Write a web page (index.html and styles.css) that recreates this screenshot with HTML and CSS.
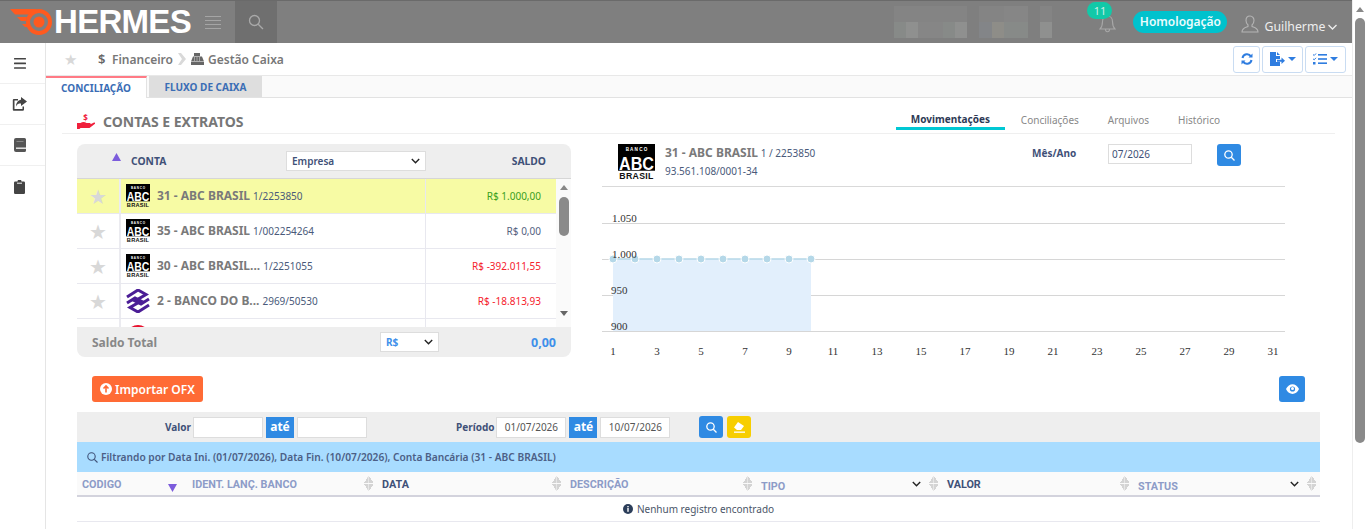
FILE: index.html
```html
<!DOCTYPE html>
<html lang="pt-BR">
<head>
    <meta charset="UTF-8">
    <meta name="viewport" content="width=device-width, initial-scale=1.0">
    <title>Hermes - Gestão Caixa</title>
    <link rel="stylesheet" href="styles.css">
</head>
<body>
    <div class="app">
        <div class="main">
            <!-- Top bar -->
            <header class="topbar">
                <div class="brand">
                    <svg class="brand__icon" width="44" height="26" viewBox="0 0 44 26">
                        <path d="M0 0h27l-5 3.500-2 2H5zM7 8h10l-1 4H11zM12 15h5l1 3h-3z" fill="#ff5a1f"/>
                        <circle cx="29" cy="13" r="11" fill="none" stroke="#ff5a1f" stroke-width="4"/>
                        <circle cx="29" cy="13" r="5.500" fill="#ff5a1f"/>
                    </svg>
                    <span class="brand__name">HERMES</span>
                </div>
                <div class="menu-lines"><i></i><i></i><i></i><i></i></div>
                <div class="top-search">
                    <svg width="16" height="16" viewBox="0 0 16 16" fill="none" stroke="#a9a9a9" stroke-width="1.3"><circle cx="6.5" cy="6.5" r="5"/><path d="M10.2 10.2L15 15"/></svg>
                </div>
                <!-- blurred-out company name -->
                <div class="blurred">
                    <i class="m1"></i><i class="m1"></i><i class="m1"></i><i class="m1"></i><i class="m1"></i><i class="m1"></i><i></i><i class="m1"></i><i class="m1"></i><i class="m2"></i><i class="m2"></i><i></i><i class="m1"></i>
                    <i class="m3"></i><i class="m4"></i><i class="m2"></i><i class="m2"></i><i class="m3"></i><i class="m4"></i><i></i><i class="m5"></i><i class="m6"></i><i class="m3"></i><i class="m3"></i><i></i><i class="m4"></i>
                </div>
                <div class="bell">
                    <svg width="17" height="20" viewBox="0 0 17 20" fill="none" stroke="#a8a8a8" stroke-width="1.1"><path d="M8.5 2c-3 0-5 2.500-5 5.500 0 4-1 6-2.500 7.500h15c-1.500-1.500-2.500-3.500-2.500-7.500C13.500 4.500 11.500 2 8.500 2zM6.500 15.500c0 3 4 3 4 0"/></svg>
                    <span class="bell__badge">11</span>
                </div>
                <span class="env-pill">Homologação</span>
                <div class="user">
                    <svg class="user__icon" width="18" height="18" viewBox="0 0 18 18" fill="none" stroke="#b5b5b5" stroke-width="1.1"><path d="M9 1c-2.500 0-4 2-4 4.500 0 2 1 3.500 2 4.500v1.500c-2 1-6 1.500-6 5.500h16c0-4-4-4.500-6-5.500V10c1-1 2-2.500 2-4.500C13 3 11.500 1 9 1z"/></svg>
                    <span>Guilherme</span>
                    <svg width="9" height="6" viewBox="0 0 9 6" fill="none" stroke="#eee" stroke-width="1.300"><path d="M.5 1l4 4 4-4"/></svg>
                </div>
            </header>

            <div class="body-row">
                <!-- Sidebar -->
                <nav class="sidebar">
                    <a class="sidebar__item">
                        <svg width="12" height="11" viewBox="0 0 12 11" fill="#444"><rect width="12" height="1.600" rx=".5"/><rect y="4.600" width="12" height="1.600" rx=".5"/><rect y="9.200" width="12" height="1.600" rx=".5"/></svg>
                    </a>
                    <a class="sidebar__item">
                        <svg width="15" height="14" viewBox="0 0 15 14" fill="#444"><path d="M9 0l6 4.500L9 9V6.500C6.500 6.500 5 7 4 9.500 4 6 6 3 9 2.700zM1.500 2H6v1.500H2.500v8.500h8V9.500H12v3a1.300 1.300 0 0 1-1.300 1.300H1.500A1.300 1.300 0 0 1 .8 12.500V3A1.200 1.200 0 0 1 1.500 2z"/></svg>
                    </a>
                    <a class="sidebar__item">
                        <svg width="12" height="14" viewBox="0 0 12 14" fill="#555"><path d="M2 0h8.500A1.500 1.500 0 0 1 12 1.500V12.500A1.500 1.500 0 0 1 10.500 14H2a2 2 0 0 1-2-2V2a2 2 0 0 1 2-2z"/><rect x="2" y="9.500" width="10" height="1.400" fill="#eee"/><rect x="2.500" y="3" width="7" height="1" fill="#888"/></svg>
                    </a>
                    <a class="sidebar__item">
                        <svg width="11" height="14" viewBox="0 0 11 14" fill="#444"><path d="M1.200 1.500H3.500a2 2 0 0 1 4 0h2.300A1.200 1.200 0 0 1 11 2.700v10.100A1.200 1.200 0 0 1 9.800 14H1.200A1.200 1.200 0 0 1 0 12.800V2.700a1.200 1.200 0 0 1 1.200-1.200z"/><rect x="3" y="2.600" width="5" height="1.300" fill="#ccc"/></svg>
                    </a>
                </nav>

                <div class="content">
                    <!-- Breadcrumb -->
                    <div class="crumbs">
                        <span class="crumbs__star">★</span>
                        <span class="crumbs__dollar">$</span>
                        <span class="crumbs__label">Financeiro</span>
                        <svg class="crumbs__sep" width="8" height="12" viewBox="0 0 8 12"><path d="M0 0h3l5 6-5 6H0l4-6z" fill="#d9d9d9"/></svg>
                        <svg class="crumbs__reg" width="13" height="12" viewBox="0 0 13 12" fill="#666"><path d="M3 0h6v3H3zM2 3.500h9l2 5H0zM0 9h13v3H0z"/><path d="M3 5h1M5.500 5h1M8 5h1M3 7h1M5.500 7h1M8 7h1" stroke="#fff" stroke-width=".8"/></svg>
                        <span class="crumbs__label">Gestão Caixa</span>
                        <div class="crumbs__actions">
                            <button class="tool-btn tool-btn--s">
                                <svg width="12" height="12" viewBox="0 0 12 12" fill="none" stroke="#2f7de0" stroke-width="2"><path d="M1.500 5A4.600 4.600 0 0 1 10 3.500M10.500 7A4.600 4.600 0 0 1 2 8.500"/><path d="M11.500 .5v4h-4zM.5 11.500v-4h4z" fill="#2f7de0" stroke="none"/></svg>
                            </button>
                            <button class="tool-btn">
                                <svg width="15" height="14" viewBox="0 0 15 14" fill="#2f7de0"><path d="M0 0h6v4h4v3H6v3h4v4H0zM7 0l3 3H7zM7 7.800h4.500V5.500L15 8.800l-3.500 3.300V9.800H7z"/></svg>
                                <i class="caret"></i>
                            </button>
                            <button class="tool-btn">
                                <svg width="14" height="12" viewBox="0 0 14 12" fill="#2f7de0"><rect x="5" y="1" width="9" height="1.600"/><rect x="5" y="5.200" width="9" height="1.600"/><rect x="5" y="9.400" width="9" height="1.600"/><path d="M0 1.500l1.200 1L3 .5M0 5.800l1.200 1L3 4.800" fill="none" stroke="#2f7de0"/><rect y="9" width="2.500" height="2.500"/></svg>
                                <i class="caret"></i>
                            </button>
                        </div>
                    </div>

                    <!-- Tabs -->
                    <div class="tabs">
                        <a class="tabs__item tabs__item--active">CONCILIAÇÃO</a>
                        <a class="tabs__item">FLUXO DE CAIXA</a>
                    </div>

                    <div class="panel">
                        <div class="panel__head">
                            <svg width="18" height="18" viewBox="0 0 18 18">
                                <path d="M0 11h3.500c2-1.500 4-1.500 6 0h3c1.500 0 1.500 1.800 0 1.800H9l4-.2 4-2c1-.3 1.500.8.700 1.500L12.500 16H3.500l-1 .9H0z" fill="#f0203c"/>
                                <text x="8.500" y="9" class="hand-dollar" text-anchor="middle">$</text>
                            </svg>
                            <h2>CONTAS E EXTRATOS</h2>
                            <div class="subnav">
                                <a class="subnav__item subnav__item--active">Movimentações</a>
                                <a class="subnav__item">Conciliações</a>
                                <a class="subnav__item">Arquivos</a>
                                <a class="subnav__item">Histórico</a>
                            </div>
                        </div>

                        <div class="split">
                            <!-- Accounts list -->
                            <section class="accounts">
                                <div class="accounts__head">
                                    <svg class="sort-up" width="9" height="8" viewBox="0 0 9 8"><path d="M4.500 0L9 8H0z" fill="#7c5cdc"/></svg>
                                    <span class="accounts__conta">CONTA</span>
                                    <select class="accounts__company"><option>Empresa</option></select>
                                    <span class="accounts__saldo">SALDO</span>
                                </div>
                                <div class="accounts__body">
                                    <div class="accounts__rows">
                                        <div class="acc-row acc-row--on">
                                            <span class="acc-row__star">★</span>
                                            <div class="acc-row__name">
                                                <svg width="24" height="24" viewBox="0 0 36 36"><rect width="36" height="26" fill="#000"/><text x="18" y="7" class="abc-top" text-anchor="middle">B A N C O</text><text x="18" y="25" class="abc-mid" text-anchor="middle" textLength="34" lengthAdjust="spacingAndGlyphs">ABC</text><text x="18" y="34" class="abc-bot" text-anchor="middle">BRASIL</text></svg>
                                                <b>31 - ABC BRASIL</b><small>1/2253850</small>
                                            </div>
                                            <span class="acc-row__val val--green">R$ 1.000,00</span>
                                        </div>
                                        <div class="acc-row">
                                            <span class="acc-row__star">★</span>
                                            <div class="acc-row__name">
                                                <svg width="24" height="24" viewBox="0 0 36 36"><rect width="36" height="26" fill="#000"/><text x="18" y="7" class="abc-top" text-anchor="middle">B A N C O</text><text x="18" y="25" class="abc-mid" text-anchor="middle" textLength="34" lengthAdjust="spacingAndGlyphs">ABC</text><text x="18" y="34" class="abc-bot" text-anchor="middle">BRASIL</text></svg>
                                                <b>35 - ABC BRASIL</b><small>1/002254264</small>
                                            </div>
                                            <span class="acc-row__val">R$ 0,00</span>
                                        </div>
                                        <div class="acc-row">
                                            <span class="acc-row__star">★</span>
                                            <div class="acc-row__name">
                                                <svg width="24" height="24" viewBox="0 0 36 36"><rect width="36" height="26" fill="#000"/><text x="18" y="7" class="abc-top" text-anchor="middle">B A N C O</text><text x="18" y="25" class="abc-mid" text-anchor="middle" textLength="34" lengthAdjust="spacingAndGlyphs">ABC</text><text x="18" y="34" class="abc-bot" text-anchor="middle">BRASIL</text></svg>
                                                <b>30 - ABC BRASIL...</b><small>1/2251055</small>
                                            </div>
                                            <span class="acc-row__val val--red">R$ -392.011,55</span>
                                        </div>
                                        <div class="acc-row">
                                            <span class="acc-row__star">★</span>
                                            <div class="acc-row__name">
                                                <svg width="24" height="24" viewBox="0 0 24 24" fill="none" stroke="#4b1d96" stroke-width="3"><path d="M1 8L12 1l8 4.500L9 12l6 3 8-5"/><path d="M23 16l-11 7-8-4.500L15 12 9 9l-8 5"/></svg>
                                                <b>2 - BANCO DO B...</b><small>2969/50530</small>
                                            </div>
                                            <span class="acc-row__val val--red">R$ -18.813,93</span>
                                        </div>
                                        <div class="acc-row">
                                            <span class="acc-row__star"></span>
                                            <div class="acc-row__name"><svg width="24" height="24" viewBox="0 0 24 24"><circle cx="12" cy="13" r="12" fill="#e8112d"/></svg></div>
                                            <span class="acc-row__val"></span>
                                        </div>
                                    </div>
                                    <div class="mini-scroll">
                                        <i class="mini-scroll__up"></i>
                                        <i class="mini-scroll__thumb"></i>
                                        <i class="mini-scroll__down"></i>
                                    </div>
                                </div>
                                <div class="accounts__foot">
                                    <span class="accounts__total">Saldo Total</span>
                                    <select class="accounts__cur"><option>R$</option></select>
                                    <span class="accounts__sum">0,00</span>
                                </div>
                            </section>

                            <!-- Account detail and chart -->
                            <section class="detail">
                                <div class="detail__head">
                                    <svg width="37" height="37" viewBox="0 0 36 36"><rect width="36" height="26" fill="#000"/><text x="18" y="7" class="abc-top" text-anchor="middle">B A N C O</text><text x="18" y="25" class="abc-mid" text-anchor="middle" textLength="34" lengthAdjust="spacingAndGlyphs">ABC</text><text x="18" y="34" class="abc-bot" text-anchor="middle">BRASIL</text></svg>
                                    <div class="detail__info">
                                        <p><b>31 - ABC BRASIL</b> 1 / 2253850</p>
                                        <p>93.561.108/0001-34</p>
                                    </div>
                                    <div class="month">
                                        <label>Mês/Ano</label>
                                        <input class="month__input" type="text" value="07/2026">
                                        <button class="icon-btn">
                                            <svg width="11" height="11" viewBox="0 0 11 11" fill="none" stroke="#fff" stroke-width="1.300"><circle cx="4.500" cy="4.500" r="3.700"/><path d="M7.300 7.300L10.500 10.500"/></svg>
                                        </button>
                                    </div>
                                </div>
                                <svg class="chart" width="683" height="170" viewBox="0 0 683 170">
                                    <path d="M0 36.500H683M0 72.500H683M0 108.500H683M0 144.500H683" stroke="#d6d6d6"/>
                                    <rect x="11" y="72" width="198" height="72" fill="#e2effc"/>
                                    <path d="M11 72H209" stroke="#b5d8e8" stroke-width="1.500" stroke-dasharray="14 8" stroke-dashoffset="-4"/>
                                    <g fill="#b5d8e8" stroke="#fff">
                                        <circle cx="11" cy="72" r="4"/><circle cx="33" cy="72" r="4"/><circle cx="55" cy="72" r="4"/><circle cx="77" cy="72" r="4"/><circle cx="99" cy="72" r="4"/><circle cx="121" cy="72" r="4"/><circle cx="143" cy="72" r="4"/><circle cx="165" cy="72" r="4"/><circle cx="187" cy="72" r="4"/><circle cx="209" cy="72" r="4"/>
                                    </g>
                                    <g class="chart__y">
                                        <text x="10" y="35">1.050</text><text x="10" y="71">1.000</text><text x="9" y="107">950</text><text x="9" y="143">900</text>
                                    </g>
                                    <g class="chart__x" text-anchor="middle">
                                        <text x="11" y="168">1</text><text x="55" y="168">3</text><text x="99" y="168">5</text><text x="143" y="168">7</text><text x="187" y="168">9</text><text x="231" y="168">11</text><text x="275" y="168">13</text><text x="319" y="168">15</text><text x="363" y="168">17</text><text x="407" y="168">19</text><text x="451" y="168">21</text><text x="495" y="168">23</text><text x="539" y="168">25</text><text x="583" y="168">27</text><text x="627" y="168">29</text><text x="671" y="168">31</text>
                                    </g>
                                </svg>
                            </section>
                        </div>

                        <!-- Import row -->
                        <div class="actions">
                            <button class="import-btn">
                                <svg width="12" height="12" viewBox="0 0 12 12"><circle cx="6" cy="6" r="6" fill="#fff"/><path d="M6 9.500V3M3.500 5.500L6 3l2.500 2.500" fill="none" stroke="#ff6b35" stroke-width="1.600"/></svg>
                                Importar OFX
                            </button>
                            <button class="eye-btn">
                                <svg width="13" height="10" viewBox="0 0 13 10"><path d="M0 5c3-6.500 10-6.500 13 0-3 6.500-10 6.500-13 0z" fill="#fff"/><circle cx="6.500" cy="5" r="2.600" fill="#2f8ae3"/><circle cx="6.500" cy="4.500" r="1.500" fill="#fff"/></svg>
                            </button>
                        </div>

                        <!-- Filters -->
                        <div class="filters">
                            <label>Valor</label>
                            <input class="filters__input" type="text">
                            <span class="filters__ate">até</span>
                            <input class="filters__input" type="text">
                            <label class="filters__periodo">Período</label>
                            <input class="filters__input" type="text" value="01/07/2026">
                            <span class="filters__ate">até</span>
                            <input class="filters__input" type="text" value="10/07/2026">
                            <button class="icon-btn icon-btn--search">
                                <svg width="11" height="11" viewBox="0 0 11 11" fill="none" stroke="#fff" stroke-width="1.300"><circle cx="4.500" cy="4.500" r="3.700"/><path d="M7.300 7.300L10.500 10.500"/></svg>
                            </button>
                            <button class="icon-btn icon-btn--clear">
                                <svg width="13" height="11" viewBox="0 0 13 11" fill="#fff"><path d="M5 0l6 4-3 4H4L1 5.500z"/><rect x="1" y="9.500" width="11" height="1.300"/></svg>
                            </button>
                        </div>
                        <div class="notice">
                            <svg width="11" height="11" viewBox="0 0 11 11" fill="none" stroke="#3f5178" stroke-width="1.100"><circle cx="4.500" cy="4.500" r="3.700"/><path d="M7.300 7.300L10.500 10.500"/></svg>
                            Filtrando por Data Ini. (01/07/2026), Data Fin. (10/07/2026), Conta Bancária (31 - ABC BRASIL)
                        </div>

                        <!-- Grid -->
                        <div class="grid-head">
                            <div class="grid-head__cell">CODIGO<svg class="sort-down" width="9" height="8" viewBox="0 0 9 8"><path d="M0 0h9L4.500 8z" fill="#7c5cdc"/></svg></div>
                            <div class="grid-head__cell">IDENT. LANÇ. BANCO<i class="sorter"></i></div>
                            <div class="grid-head__cell grid-head__cell--dark">DATA<i class="sorter"></i></div>
                            <div class="grid-head__cell">DESCRIÇÃO<i class="sorter"></i></div>
                            <div class="grid-head__cell grid-head__cell--low">TIPO<span class="grid-head__tools"><svg width="9" height="6" viewBox="0 0 9 6" fill="none" stroke="#222" stroke-width="1.400"><path d="M.8 1l3.700 3.700L8.200 1"/></svg><i class="sorter"></i></span></div>
                            <div class="grid-head__cell grid-head__cell--dark">VALOR<i class="sorter"></i></div>
                            <div class="grid-head__cell grid-head__cell--low">STATUS<span class="grid-head__tools"><svg width="9" height="6" viewBox="0 0 9 6" fill="none" stroke="#222" stroke-width="1.400"><path d="M.8 1l3.700 3.700L8.200 1"/></svg><i class="sorter"></i></span></div>
                        </div>
                        <div class="grid-empty">
                            <svg width="10" height="10" viewBox="0 0 10 10"><circle cx="5" cy="5" r="5" fill="#2c3e5a"/><rect x="4.300" y="4" width="1.400" height="3.800" fill="#fff"/><rect x="4.300" y="2" width="1.400" height="1.300" fill="#fff"/></svg>
                            Nenhum registro encontrado
                        </div>
                    </div>
                </div>
            </div>
        </div>

        <!-- Page scrollbar -->
        <div class="page-scroll">
            <i class="page-scroll__up"></i>
            <i class="page-scroll__thumb"></i>
        </div>
    </div>
</body>
</html>
```

FILE: styles.css
```css
/* Base */
* {
    box-sizing: border-box;
}

html, body {
    margin: 0;
    height: 529px;
    overflow: hidden;
}

body {
    font-family: "Noto Sans", "Open Sans", sans-serif;
    font-size: 10px;
    color: #3f5178;
    background: #fff;
}

button {
    font-family: inherit;
    cursor: pointer;
}

.abc-top {
    font: bold 4.500px "Liberation Sans", sans-serif;
    fill: #fff;
}

.abc-mid {
    font: bold 18px "Liberation Sans", sans-serif;
    fill: #fff;
}

.abc-bot {
    font: bold 8.500px "Liberation Sans", sans-serif;
    fill: #111;
    letter-spacing: .3px;
}

.app {
    display: flex;
    height: 529px;
}

.main {
    width: 1352px;
    flex: none;
    display: flex;
    flex-direction: column;
}

/* Top bar */
.topbar {
    height: 43px;
    flex: none;
    display: flex;
    align-items: center;
    background: #7f7f7f;
    border-top: 1px solid #6a6a6a;
}

.brand {
    display: flex;
    align-items: center;
    width: 197px;
    padding-left: 10px;
}

.brand__icon {
    flex: none;
}

.brand__name {
    font: bold 33px "Liberation Sans", sans-serif;
    letter-spacing: -.7px;
    color: #fff;
}

.menu-lines {
    width: 38px;
    padding: 0 8px 0 8px;
    display: flex;
    flex-direction: column;
    gap: 3px;
}

.menu-lines i {
    display: block;
    width: 16px;
    height: 1px;
    background: #a5a5a5;
}

.top-search {
    width: 42px;
    height: 42px;
    display: flex;
    align-items: center;
    justify-content: center;
    background: #6f6f6f;
}

.blurred {
    display: grid;
    grid-template-columns: repeat(13, 12.2px);
    grid-template-rows: 16px 16px;
    margin-left: 617px;
}

.blurred .m1 { background: #848484; }
.blurred .m2 { background: #868686; }
.blurred .m3 { background: #878a88; }
.blurred .m4 { background: #8f908f; }
.blurred .m5 { background: #838588; }
.blurred .m6 { background: #8e8d88; }

.bell {
    position: relative;
    margin-left: 47px;
    margin-top: 4px;
    height: 20px;
}

.bell__badge {
    position: absolute;
    left: -12px;
    top: -12px;
    width: 25px;
    height: 17px;
    border-radius: 9px;
    background: #12c9a8;
    color: #cdeee7;
    font-size: 11px;
    line-height: 17px;
    text-align: center;
}

.env-pill {
    margin-left: 17px;
    width: 94px;
    height: 22px;
    border-radius: 11px;
    background: #00c2cd;
    color: #eafcfd;
    font-size: 12px;
    font-weight: 600;
    line-height: 22px;
    text-align: center;
}

.user {
    display: flex;
    align-items: center;
    margin-left: 14px;
    margin-top: 9px;
    color: #eee;
    font-size: 12.300px;
}

.user__icon {
    margin-bottom: 5px;
}

.user span {
    margin: 0 3px 0 5px;
}

/* Sidebar */
.body-row {
    flex: 1;
    display: flex;
    min-height: 0;
}

.sidebar {
    width: 46px;
    flex: none;
    border-right: 1px solid #e5e5e5;
}

.sidebar__item {
    height: 41px;
    display: flex;
    align-items: center;
    justify-content: center;
    padding-right: 6px;
    border-bottom: 1px solid #f0f0f0;
}

.sidebar__item:last-child {
    border-bottom: none;
}

/* Content */
.content {
    flex: 1;
    min-width: 0;
    display: flex;
    flex-direction: column;
}

.crumbs {
    height: 33px;
    flex: none;
    display: flex;
    align-items: center;
    padding-left: 18px;
    border-bottom: 1px solid #e8e8e8;
    color: #777;
}

.crumbs__star {
    width: 34px;
    font-size: 15px;
    color: #d8d8d8;
}

.crumbs__dollar {
    width: 14px;
    font-size: 13px;
    font-weight: 600;
    color: #666;
}

.crumbs__label {
    font-size: 12px;
    font-weight: 600;
}

.crumbs__sep {
    margin: 0 5px 0 5px;
}

.crumbs__reg {
    margin-right: 4px;
}

.crumbs__actions {
    margin-left: auto;
    margin-right: 6px;
    display: flex;
    gap: 2px;
}

.tool-btn {
    width: 41px;
    height: 27px;
    padding: 0;
    display: flex;
    align-items: center;
    justify-content: center;
    gap: 3px;
    background: #fff;
    border: 1px solid #c9dcf2;
    border-radius: 3px;
}

.tool-btn--s {
    width: 27px;
}

.caret {
    width: 0;
    height: 0;
    border-left: 4px solid transparent;
    border-right: 4px solid transparent;
    border-top: 4px solid #2f7de0;
}

.tabs {
    height: 22px;
    flex: none;
    display: flex;
    gap: 2px;
    background: #fafafa;
    border-bottom: 1px solid #e2e2e2;
}

.tabs__item {
    height: 21px;
    padding-top: 1px;
    font-size: 10px;
    font-weight: 700;
    line-height: 20px;
    color: #3a6db5;
    background: #dedede;
    width: 113px;
    text-align: center;
}

.tabs__item--active {
    width: 101px;
    background: #fff;
    height: 22px;
    border-top: 2px solid #ff7a85;
    border-right: 1px solid #e2e2e2;
    padding-top: 0;
}

.panel {
    flex: 1;
    margin-right: 1px;
    border-left: 1px solid #e5e5e5;
    margin-left: -1px;
    min-height: 0;
}

.panel__head {
    height: 36px;
    margin: 0 16px;
    display: flex;
    align-items: flex-start;
    padding: 14px 0 0 15px;
    border-bottom: 1px solid #efefef;
}

.hand-dollar {
    font: bold 8px "Noto Sans", sans-serif;
    fill: #f0203c;
}

.panel__head h2 {
    margin: 0 0 0 8px;
    font-size: 14px;
    line-height: 20px;
    font-weight: 700;
    color: #777;
}

.subnav {
    margin-left: auto;
    margin-right: 115px;
    margin-top: -14px;
    height: 35px;
    display: flex;
    align-items: flex-end;
    gap: 29px;
}

.subnav__item {
    height: 20px;
    font-size: 10px;
    color: #888;
}

.subnav__item--active {
    width: 109px;
    margin-right: -13px;
    height: 18px;
    color: #2d3a55;
    font-weight: 700;
    text-align: center;
    border-bottom: 3px solid #00c8d4;
    margin-bottom: 3px;
    line-height: 15px;
}

.split {
    display: flex;
    gap: 31px;
    padding: 10px 0 0 31px;
}

/* Accounts */
.accounts {
    width: 494px;
    height: 213px;
    flex: none;
    display: flex;
    flex-direction: column;
}

.accounts__head {
    height: 35px;
    flex: none;
    display: flex;
    align-items: center;
    background: #eee;
    border-radius: 8px 8px 0 0;
    border-bottom: 1px solid #d6d6d6;
    font-weight: 700;
    font-size: 10.300px;
}

.sort-up {
    margin: -9px 0 0 35px;
}

.accounts__conta {
    margin-left: 10px;
    width: 155px;
}

/* native arrow follows the text colour, so draw a dark one */
.accounts__company,
.accounts__cur {
    appearance: none;
    height: 20px;
    font-family: inherit;
    font-size: 10px;
    background: #fff url("data:image/svg+xml,%3Csvg xmlns='http://www.w3.org/2000/svg' width='9' height='6'%3E%3Cpath d='M.8 1l3.700 3.700L8.200 1' fill='none' stroke='%23222' stroke-width='1.400'/%3E%3C/svg%3E") no-repeat right 5px center;
    border: 1px solid #ddd;
}

.accounts__company {
    width: 140px;
    font-weight: 600;
    color: #3f5178;
    padding-left: 5px;
}

.accounts__cur {
    width: 59px;
    font-weight: 700;
    color: #3f90ea;
    padding-left: 5px;
}

.accounts__saldo {
    margin-left: auto;
    margin-right: 25px;
}

.accounts__body {
    height: 148px;
    flex: none;
    display: flex;
    overflow: hidden;
}

.accounts__rows {
    width: 479px;
    flex: none;
}

.acc-row {
    height: 35px;
    display: grid;
    grid-template-columns: 44px 305px 130px;
    border-bottom: 1px solid #e8e8ef;
    background: #fff;
}

.acc-row--on {
    background: #f7fba4;
}

.acc-row__star {
    display: flex;
    align-items: center;
    justify-content: center;
    font-size: 20px;
    color: #d8d8d8;
    border-right: 2px solid #ebebf0;
}

.acc-row__name {
    display: flex;
    align-items: center;
    padding-left: 5px;
    border-right: 1px solid #e8e8ef;
}

.acc-row__name b {
    margin: -2px 0 0 7px;
    font-size: 12px;
    color: #7a7a7a;
}

.acc-row__name small {
    margin-left: 3px;
    font-size: 10px;
    color: #4a5a7a;
}

.acc-row__val {
    display: flex;
    align-items: center;
    justify-content: flex-end;
    padding-right: 15px;
    font-size: 10px;
    color: #55627f;
}

.val--green {
    color: #3aa01c;
}

.val--red {
    color: #f5222d;
}

.mini-scroll {
    width: 15px;
    flex: none;
    display: flex;
    flex-direction: column;
    align-items: center;
    background: #fafafa;
    padding-top: 6px;
}

.mini-scroll__up {
    border-left: 4px solid transparent;
    border-right: 4px solid transparent;
    border-bottom: 5px solid #888;
}

.mini-scroll__thumb {
    width: 10px;
    height: 39px;
    margin-top: 7px;
    border-radius: 5px;
    background: #8a8a8a;
}

.mini-scroll__down {
    margin-top: 75px;
    border-left: 4px solid transparent;
    border-right: 4px solid transparent;
    border-top: 5px solid #666;
}

.accounts__foot {
    height: 30px;
    flex: none;
    display: flex;
    align-items: center;
    background: #eee;
    border-radius: 0 0 8px 8px;
}

.accounts__total {
    margin-left: 15px;
    width: 288px;
    font-size: 12px;
    font-weight: 700;
    color: #888;
}

.accounts__sum {
    margin-left: auto;
    margin-right: 15px;
    font-size: 12.500px;
    font-weight: 700;
    color: #3f90ea;
}

/* Detail and chart */
.detail {
    width: 683px;
    flex: none;
}

.detail__head {
    height: 43px;
    display: flex;
    border-bottom: 1px solid #d9d9d9;
    padding-left: 16px;
}

.detail__info {
    margin-left: 10px;
    font-size: 10px;
    color: #4a5a7a;
}

.detail__info p {
    margin: 0;
    line-height: 18px;
}

.detail__info b {
    font-size: 12px;
    color: #7a7a7a;
}

.month {
    margin-left: auto;
    margin-right: 44px;
    display: flex;
    align-items: flex-start;
}

.month label {
    width: 76px;
    font-size: 10px;
    font-weight: 700;
    line-height: 19px;
}

.month__input {
    width: 84px;
    height: 20px;
    padding: 0 3px;
    font-family: inherit;
    font-size: 10px;
    color: #3f5178;
    border: 1px solid #ddd;
}

.icon-btn {
    width: 24px;
    height: 22px;
    margin-left: 25px;
    padding: 0;
    display: flex;
    align-items: center;
    justify-content: center;
    background: #2f8ae3;
    border: none;
    border-radius: 3px;
}

.chart {
    display: block;
}

.chart__y text,
.chart__x text {
    font: 11px "Liberation Serif", serif;
    fill: #333;
}

/* Import row */
.actions {
    height: 26px;
    margin: 19px 0 10px 46px;
    display: flex;
    justify-content: space-between;
    padding-right: 46px;
}

.import-btn {
    width: 111px;
    height: 26px;
    padding: 0;
    display: flex;
    align-items: center;
    justify-content: center;
    gap: 3px;
    background: #ff6b35;
    border: none;
    border-radius: 3px;
    color: #fff;
    font-size: 12px;
    font-weight: 600;
}

.eye-btn {
    width: 26px;
    height: 26px;
    padding: 0;
    background: #2f8ae3;
    border: none;
    border-radius: 3px;
    display: flex;
    align-items: center;
    justify-content: center;
}

/* Filters */
.filters {
    width: 1243px;
    height: 30px;
    margin-left: 31px;
    display: flex;
    align-items: center;
    gap: 2px;
    padding-left: 88px;
    background: #eee;
    font-size: 10px;
    font-weight: 700;
}

.filters__input {
    width: 70px;
    height: 21px;
    padding: 0;
    text-align: center;
    font-family: inherit;
    font-size: 10px;
    color: #555;
    background: #fff;
    border: 1px solid #ddd;
}

.filters__ate {
    width: 28px;
    height: 21px;
    margin: 0 1px;
    background: #2f8ae3;
    color: #fff;
    font-size: 12px;
    line-height: 20px;
    text-align: center;
}

.filters__periodo {
    margin-left: 87px;
}

.icon-btn--search {
    margin-left: 27px;
}

.icon-btn--clear {
    margin-left: 2px;
    background: #f7ce00;
}

.notice {
    width: 1243px;
    height: 30px;
    margin-left: 31px;
    display: flex;
    align-items: center;
    gap: 3px;
    padding-left: 10px;
    background: #a8dcff;
    font-size: 10.200px;
    font-weight: 600;
    color: #4c5f86;
}

/* Grid */
.grid-head {
    width: 1243px;
    height: 25px;
    margin-left: 31px;
    display: grid;
    grid-template-columns: 110px 190px 188px 191px 186px 191px 187px;
    background: #fafafa;
    border-bottom: 2px solid #d3d3dd;
}

.grid-head__cell {
    display: flex;
    align-items: center;
    justify-content: space-between;
    padding: 2px 4px 0 5px;
    font-family: Roboto, sans-serif;
    font-size: 10.800px;
    font-weight: 700;
    color: #8d9cc8;
}

.grid-head__cell--dark {
    color: #3f5178;
}

.grid-head__cell--low {
    padding-top: 6px;
}

.grid-head__tools {
    display: flex;
    align-items: center;
    gap: 8px;
    margin-top: -6px;
}

.grid-head__tools .sorter {
    margin-top: 0;
}

.sort-down {
    margin: 6px 6px 0 0;
}

.sorter {
    width: 9px;
    height: 15px;
    flex: none;
    margin-top: -2px;
    background:
        linear-gradient(to bottom right, transparent 49%, #d4d4d4 50%) left top / 50% 7px no-repeat,
        linear-gradient(to bottom left, transparent 49%, #d4d4d4 50%) right top / 50% 7px no-repeat,
        linear-gradient(to top right, transparent 49%, #d4d4d4 50%) left bottom / 50% 7px no-repeat,
        linear-gradient(to top left, transparent 49%, #d4d4d4 50%) right bottom / 50% 7px no-repeat;
}

.grid-empty {
    width: 1243px;
    height: 25px;
    margin-left: 31px;
    display: flex;
    align-items: center;
    justify-content: center;
    gap: 4px;
    border-bottom: 1px solid #e8e8ef;
    font-size: 10px;
    color: #4a5568;
}

/* Page scrollbar */
.page-scroll {
    flex: 1;
    display: flex;
    flex-direction: column;
    align-items: center;
    background: #fff;
    border-left: 1px solid #eee;
    padding-top: 7px;
}

.page-scroll__up {
    border-left: 4px solid transparent;
    border-right: 4px solid transparent;
    border-bottom: 5px solid #888;
}

.page-scroll__thumb {
    width: 10px;
    height: 425px;
    margin-top: 6px;
    border-radius: 5px;
    background: #8a8a8a;
}
```
